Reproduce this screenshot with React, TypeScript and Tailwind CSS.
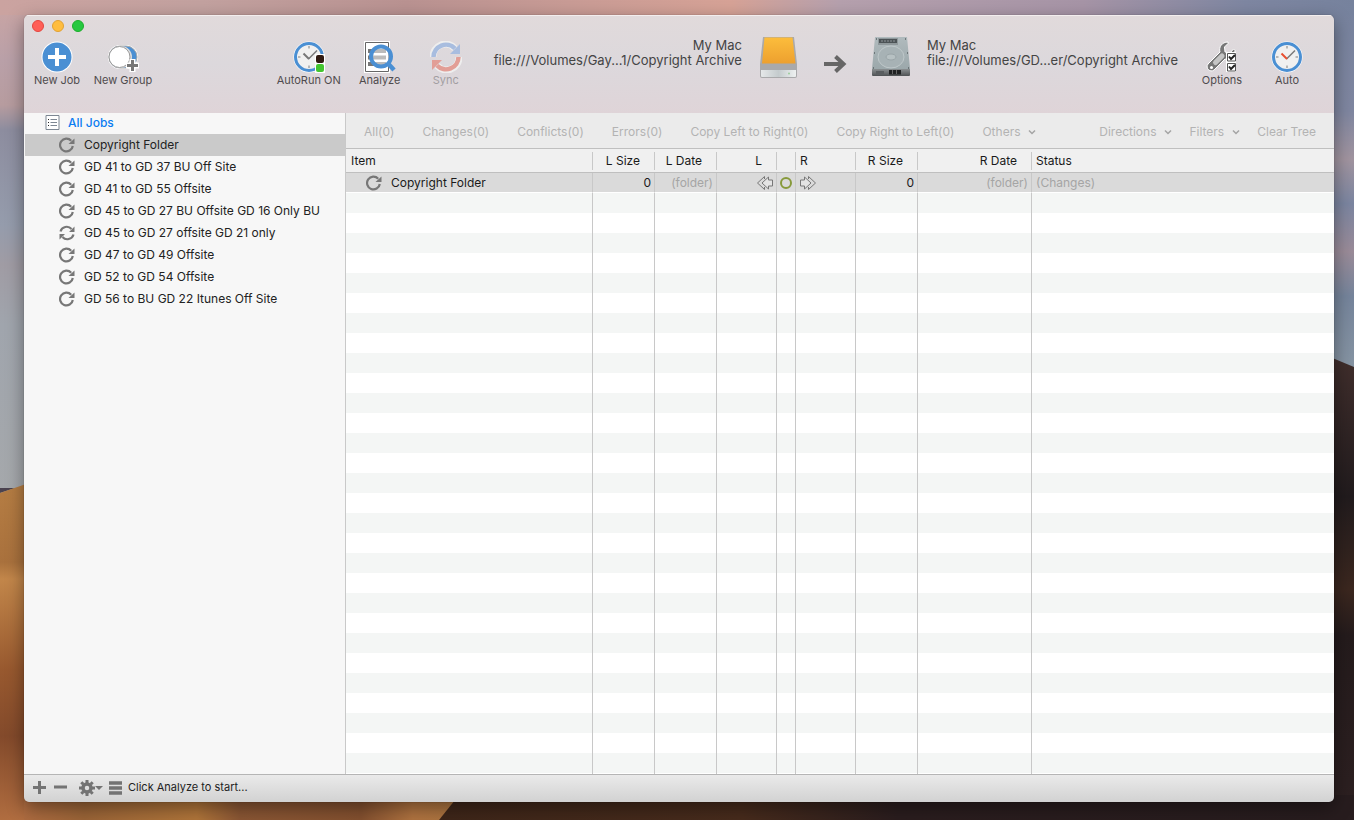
import { useState } from 'react';
import type { ReactNode } from 'react';

const jobs = [
    { name: "Copyright Folder", twoWay: false },
    { name: "GD 41 to GD 37 BU Off Site", twoWay: false },
    { name: "GD 41 to GD 55 Offsite", twoWay: false },
    { name: "GD 45 to GD 27 BU Offsite GD 16 Only BU", twoWay: false },
    { name: "GD 45 to GD 27 offsite GD 21 only", twoWay: true },
    { name: "GD 47 to GD 49 Offsite", twoWay: false },
    { name: "GD 52 to GD 54 Offsite", twoWay: false },
    { name: "GD 56 to BU GD 22 Itunes Off Site", twoWay: false }
];

const filters = ["All(0)", "Changes(0)", "Conflicts(0)", "Errors(0)", "Copy Left to Right(0)", "Copy Right to Left(0)"];

const columns = [
    { title: "Item", width: "w-[247px]", align: "text-left pl-[5px]" },
    { title: "L Size", width: "w-[62px]", align: "text-right pr-[14px]" },
    { title: "L Date", width: "w-[62px]", align: "text-right pr-[14px]" },
    { title: "L", width: "w-[60px]", align: "text-right pr-[14px]" },
    { title: "", width: "w-[19px]", align: "" },
    { title: "R", width: "w-[60px]", align: "text-left pl-1" },
    { title: "R Size", width: "w-[62px]", align: "text-right pr-[14px]" },
    { title: "R Date", width: "w-[114px]", align: "text-right pr-[14px]" },
    { title: "Status", width: "", align: "text-left pl-1" }
];

const emptyRows = Array.from({ length: 60 }, (_, i) => i);

function Wallpaper() {
    return (
        <svg className="absolute inset-0 -z-10 h-full w-full" viewBox="0 0 1354 820" preserveAspectRatio="none" aria-hidden="true">
            <defs>
                <linearGradient id="skyLeft" x1="0" y1="0" x2="0" y2="500" gradientUnits="userSpaceOnUse">
                    <stop offset="0" stopColor="#cba5a3" />
                    <stop offset="0.12" stopColor="#b9a0a8" />
                    <stop offset="0.21" stopColor="#b79c9f" />
                    <stop offset="0.26" stopColor="#8d8d9f" />
                    <stop offset="0.45" stopColor="#959cac" />
                    <stop offset="0.53" stopColor="#a09ca4" />
                    <stop offset="0.65" stopColor="#a0a5ad" />
                    <stop offset="1" stopColor="#a5a8ab" />
                </linearGradient>
                <linearGradient id="skyRight" x1="0" y1="0" x2="0" y2="370" gradientUnits="userSpaceOnUse">
                    <stop offset="0" stopColor="#76829d" />
                    <stop offset="0.3" stopColor="#7f86a0" />
                    <stop offset="0.43" stopColor="#a1949f" />
                    <stop offset="0.55" stopColor="#7b85a0" />
                    <stop offset="0.68" stopColor="#9a8b98" />
                    <stop offset="0.8" stopColor="#75849b" />
                    <stop offset="1" stopColor="#8795a3" />
                </linearGradient>
                <linearGradient id="skyTop">
                    <stop offset="0" stopColor="#cba3a0" />
                    <stop offset="0.15" stopColor="#c2a19f" />
                    <stop offset="0.3" stopColor="#b99291" />
                    <stop offset="0.42" stopColor="#c89b95" />
                    <stop offset="0.54" stopColor="#d6a296" />
                    <stop offset="0.62" stopColor="#b5a0ad" />
                    <stop offset="0.8" stopColor="#a694a6" />
                    <stop offset="0.92" stopColor="#7e86a1" />
                    <stop offset="1" stopColor="#76829d" />
                </linearGradient>
                <linearGradient id="dune" x1="0" y1="485" x2="0" y2="820" gradientUnits="userSpaceOnUse">
                    <stop offset="0" stopColor="#b57d43" />
                    <stop offset="0.23" stopColor="#a9713d" />
                    <stop offset="0.28" stopColor="#c2864a" />
                    <stop offset="0.55" stopColor="#98592f" />
                    <stop offset="0.75" stopColor="#834a2b" />
                    <stop offset="1" stopColor="#b06d40" />
                </linearGradient>
                <linearGradient id="duneCrest" x1="24" y1="0" x2="456" y2="0" gradientUnits="userSpaceOnUse">
                    <stop offset="0" stopColor="#ad6b40" />
                    <stop offset="0.14" stopColor="#9a6437" />
                    <stop offset="0.4" stopColor="#b0753a" />
                    <stop offset="0.5" stopColor="#8a5634" />
                    <stop offset="0.78" stopColor="#83502f" />
                    <stop offset="0.9" stopColor="#b07340" />
                    <stop offset="1" stopColor="#ab743f" />
                </linearGradient>
                <linearGradient id="duneShadow" x1="440" y1="0" x2="1354" y2="0" gradientUnits="userSpaceOnUse">
                    <stop offset="0" stopColor="#3e2619" />
                    <stop offset="0.33" stopColor="#472b1c" />
                    <stop offset="0.5" stopColor="#2a1d1e" />
                    <stop offset="1" stopColor="#271c1e" />
                </linearGradient>
                <linearGradient id="shade" x1="0" y1="358" x2="0" y2="820" gradientUnits="userSpaceOnUse">
                    <stop offset="0" stopColor="#402e2c" />
                    <stop offset="0.3" stopColor="#211b1d" />
                    <stop offset="0.5" stopColor="#3b271f" />
                    <stop offset="0.6" stopColor="#241b1c" />
                    <stop offset="1" stopColor="#2d2021" />
                </linearGradient>
            </defs>
            <rect width="677" height="820" fill="url(#skyLeft)" />
            <rect x="677" width="677" height="820" fill="url(#skyRight)" />
            <rect width="1354" height="15" fill="url(#skyTop)" />
            <path d="M0 488h15l-15 5z" fill="#4b4350" />
            <path d="M0 493l26-9V820H0z" fill="url(#dune)" />
            <path d="M1330 357l24 10V820h-24z" fill="url(#shade)" />
            <rect x="400" y="795" width="954" height="25" fill="url(#duneShadow)" />
            <path d="M24 795h435l-20 25H24z" fill="url(#duneCrest)" />
        </svg>
    );
}

function ClockFace({ hand }: { hand: string }) {
    return (
        <g>
            <circle cx="16" cy="16" r="15.5" fill="#fff" />
            <circle cx="16" cy="16" r="13.5" fill="#f0f0f0" stroke="#4a8fd3" strokeWidth="3" />
            <path d="M16 5v2.5M16 24.5V27M5 16h2.5M24.5 16H27" stroke="#a5a5a5" strokeWidth="1.5" />
            <path d="M15.5 18L24 9.5" stroke="#777" strokeWidth="1.5" />
            <path d="M16 18l-5.5-5.5" stroke={hand} strokeWidth="2" />
        </g>
    );
}

function NewJobIcon() {
    return (
        <svg className="size-8" viewBox="0 0 32 32">
            <circle cx="16" cy="16" r="15.5" fill="#fff" />
            <circle cx="16" cy="16" r="14.5" fill="#4a8fd3" />
            <path d="M16 7v18M7 16h18" stroke="#fff" strokeWidth="4" />
        </svg>
    );
}

function NewGroupIcon() {
    return (
        <svg className="size-8" viewBox="0 0 32 32">
            <rect x="1" y="4" width="30" height="24" rx="12" fill="#fff" />
            <rect x="2" y="5" width="28" height="22" rx="11" fill="#4a8fd3" stroke="#aaa" />
            <circle cx="14" cy="16" r="11" fill="#ddd" />
            <circle cx="12.5" cy="16" r="10.5" fill="#fff" stroke="#999" />
            <path d="M25.5 18v13M19 24.5h13" stroke="#fff" strokeWidth="6" />
            <path d="M25.5 19v11M20 24.5h11" stroke="#777" strokeWidth="3" />
        </svg>
    );
}

function AutoRunIcon() {
    return (
        <svg className="size-8" viewBox="0 0 32 32">
            <ClockFace hand="#777" />
            <path d="M22 13h10v19H22z" fill="#fff" />
            <rect x="23" y="14" width="8" height="8" rx="2" fill="#301a12" />
            <rect x="23" y="23" width="8" height="8" rx="2" fill="#43c52f" />
        </svg>
    );
}

function AnalyzeIcon() {
    return (
        <svg className="size-8" viewBox="0 0 32 32">
            <path d="M0 0h26v32H0z" fill="#fff" />
            <path d="M1.5 1.5h23v29h-23z" fill="#fff" stroke="#666" />
            <path d="M4 10h18M4 16.5h18M4 23h18" stroke="#777" strokeWidth="4" />
            <circle cx="17" cy="15.5" r="10" fill="#fff" fillOpacity="0.5" stroke="#4a8fd3" strokeWidth="4" />
            <path d="M24 22.5l6 6.5" stroke="#4a8fd3" strokeWidth="4.5" />
        </svg>
    );
}

function SyncIcon() {
    return (
        <svg className="size-8" viewBox="0 0 32 32" fill="none">
            <path d="M3 16A12.5 12.5 0 0 1 25 7.5" stroke="#eee" strokeWidth="7" />
            <path d="M29 16A12.5 12.5 0 0 1 7 24.5" stroke="#eee" strokeWidth="7" />
            <path d="M3.5 16A12.5 12.5 0 0 1 25 7.5" stroke="#a8bddf" strokeWidth="4.5" />
            <path d="M30 3v10H20z" fill="#a8bddf" />
            <path d="M28.5 16A12.5 12.5 0 0 1 7 24.5" stroke="#e29e96" strokeWidth="4.5" />
            <path d="M2 29V19h10z" fill="#e29e96" />
        </svg>
    );
}

function OptionsIcon() {
    return (
        <svg className="size-8" viewBox="0 0 32 32">
            <path
                d="M22 1C16 1 12.5 6 14 11L2 23c-3 4 2 9 6 6l11-11c5 1.5 10-3 10-8.5L27.5 8 24 12l-5-1-.5-5L22 2.5z"
                fill="#777"
                stroke="#fff"
            />
            <path d="M9.5 21.5l6.5-6.5" stroke="#c5c5c5" strokeWidth="5" strokeLinecap="round" />
            <circle cx="5.5" cy="26.5" r="1.5" fill="#fff" />
            <path d="M20 11h10v20H20z" fill="#fff" />
            <path d="M21.5 12.5h8V20h-8zM21.5 22.5h8V30h-8z" fill="#fff" stroke="#555" />
            <path d="M23 15.500l2 2.500 4-4M23 25.500l2 2.500 4-4" fill="none" stroke="#222" strokeWidth="2" />
        </svg>
    );
}

function AutoIcon() {
    return (
        <svg className="size-8" viewBox="0 0 32 32">
            <ClockFace hand="#e84e30" />
        </svg>
    );
}

function ExternalDriveIcon() {
    return (
        <svg className="h-[42px] w-10" viewBox="0 0 40 42" role="img" aria-label="External drive">
            <defs>
                <linearGradient id="driveTop" x1="0" y1="0" x2="0" y2="1">
                    <stop offset="0" stopColor="#fcbd3c" />
                    <stop offset="1" stopColor="#eda02f" />
                </linearGradient>
                <linearGradient id="driveFront">
                    <stop offset="0" stopColor="#e5e8e9" />
                    <stop offset="0.5" stopColor="#c4cbcd" />
                    <stop offset="1" stopColor="#eef1f1" />
                </linearGradient>
            </defs>
            <path d="M5 0h31l3 27v12q0 2-2 2H4q-2 0-2-2V27z" fill="#a9a9ab" />
            <path d="M6.500 0.500h28L37.500 26.500H4z" fill="url(#driveTop)" />
            <path d="M3 33h35v6q0 1-1 1H4q-1 0-1-1z" fill="url(#driveFront)" />
            <circle cx="31" cy="36.5" r="1" fill="#9ccc9c" />
        </svg>
    );
}

function HardDiskIcon() {
    return (
        <svg className="h-[42px] w-10" viewBox="0 0 40 42" role="img" aria-label="Internal drive">
            <defs>
                <linearGradient id="diskTop" x1="0" y1="0" x2="0" y2="1">
                    <stop offset="0" stopColor="#b0babd" />
                    <stop offset="1" stopColor="#98a5a8" />
                </linearGradient>
                <linearGradient id="diskFront" x1="0" y1="0" x2="0" y2="1">
                    <stop offset="0" stopColor="#8a8f91" />
                    <stop offset="1" stopColor="#4e5153" />
                </linearGradient>
            </defs>
            <path d="M4 0h32l3 32v6H1v-6z" fill="url(#diskTop)" />
            <path d="M1 32h38v6q0 1-1 1H2q-1 0-1-1z" fill="url(#diskFront)" />
            <path d="M7 1h20v7H7z" fill="#8f989b" />
            <path d="M8 2h18v4H8z" fill="#4c5356" />
            <path d="M10 4h14" stroke="#8c9497" strokeDasharray="2 1" />
            <ellipse cx="20" cy="20" rx="13" ry="11" fill="#a7b2b5" stroke="#bfc8ca" />
            <ellipse cx="20" cy="20" rx="5" ry="3" fill="#b7c1c3" stroke="#9aa5a8" />
            <path d="M18 33h12v4.500H18z" fill="#202223" />
            <path d="M21.500 33v4M25.500 33v4" stroke="#666" />
            <path d="M5 34h8v3H5z" fill="#595d5f" />
            <path d="M5 2h1M34 2h1M3 16h1M36 16h1M2 31h1M37 31h1" stroke="#5c6366" strokeWidth="1.5" />
        </svg>
    );
}

function JobIcon({ twoWay = false }: { twoWay?: boolean }) {
    return (
        <svg className="size-4 shrink-0" viewBox="0 0 16 16" fill="none" aria-hidden="true">
            {twoWay ? (
                <>
                    <path d="M1.5 6.500A6.400 6.400 0 0 1 12.500 4M14.500 9.500A6.400 6.400 0 0 1 3.500 12" stroke="#777" strokeWidth="2.2" />
                    <path d="M15.500 1.500V7H10zM0.500 14.500V9H6z" fill="#777" />
                </>
            ) : (
                <>
                    <path d="M12.200 3.700A6.400 6.400 0 1 0 13.800 9" stroke="#777" strokeWidth="2.2" />
                    <path d="M15.500 1.500V7H9.500z" fill="#777" />
                </>
            )}
        </svg>
    );
}

function ToolButton({ label, className, disabled, children }: { label: string; className: string; disabled?: boolean; children: ReactNode }) {
    return (
        <button
            type="button"
            disabled={disabled}
            className={`flex shrink-0 flex-col items-center whitespace-nowrap text-[11px] leading-[14px] text-[#4f4b4d] disabled:text-[#a29ea2] ${className}`}
        >
            {children}
            {label}
        </button>
    );
}

function Chevron() {
    return (
        <svg className="h-2 w-2" viewBox="0 0 8 8" fill="none" aria-hidden="true">
            <path d="M1 2.500l3 3 3-3" stroke="#a5a5a5" strokeWidth="1.5" />
        </svg>
    );
}

function Toolbar() {
    return (
        <header className="h-[98px] shrink-0 bg-linear-to-b from-[#e1dadb] via-[#dcd8dc] to-[#dfd4d8] shadow-[inset_0_1px_0_#f3eeee]">
            <div className="flex h-[22px] items-center gap-2 pl-2">
                <button type="button" aria-label="Close" className="size-3 rounded-full border border-[#e2463f] bg-[#ff5f57]" />
                <button type="button" aria-label="Minimize" className="size-3 rounded-full border border-[#e0a033] bg-[#ffbd3f]" />
                <button type="button" aria-label="Zoom" className="size-3 rounded-full border border-[#1dad2b] bg-[#27c840]" />
            </div>
            <div className="flex items-start">
                <div className="flex pt-1">
                    <ToolButton label="New Job" className="w-[66px]"><NewJobIcon /></ToolButton>
                    <ToolButton label="New Group" className="w-[66px]"><NewGroupIcon /></ToolButton>
                </div>
                <div className="flex flex-1 items-start justify-end pr-3">
                    <div className="flex gap-[2px] pt-1">
                        <ToolButton label="AutoRun ON" className="w-[74px]"><AutoRunIcon /></ToolButton>
                        <ToolButton label="Analyze" className="w-16"><AnalyzeIcon /></ToolButton>
                        <ToolButton label="Sync" className="w-16" disabled><SyncIcon /></ToolButton>
                    </div>
                    <div className="ml-4 pt-px text-right text-[13px] leading-[15px] whitespace-nowrap text-[#444]">
                        <p>My Mac</p>
                        <p>file:///Volumes/Gay...1/Copyright Archive</p>
                    </div>
                    <div className="flex items-start pl-4">
                        <ExternalDriveIcon />
                        <svg className="mt-[17px] ml-[25px] h-5 w-6" viewBox="0 0 24 20" fill="none" role="img" aria-label="Copies to">
                            <path d="M1 10h20M12.5 2.500l8 7.500-8 7.500" stroke="#666" strokeWidth="4" />
                        </svg>
                        <div className="ml-6"><HardDiskIcon /></div>
                    </div>
                    <div className="ml-4 pt-px text-left text-[13px] leading-[15px] whitespace-nowrap text-[#444]">
                        <p>My Mac</p>
                        <p>file:///Volumes/GD...er/Copyright Archive</p>
                    </div>
                </div>
                <div className="flex gap-[2px] pt-1 pr-4">
                    <ToolButton label="Options" className="w-16"><OptionsIcon /></ToolButton>
                    <ToolButton label="Auto" className="w-[62px]"><AutoIcon /></ToolButton>
                </div>
            </div>
        </header>
    );
}

function Sidebar({ selected, onSelect }: { selected: number; onSelect: (index: number) => void }) {
    return (
        <nav className="w-[322px] shrink-0 border-r border-[#c9c9c9] bg-[#f7f7f7] pl-px">
            <h2 className="flex h-[21px] items-center gap-2 pb-[2px] pl-5 text-xs font-medium text-[#0a7cf2]">
                <svg className="h-[15px] w-[15px]" viewBox="0 0 15 15" aria-hidden="true">
                    <path d="M1 0.500h13v14H1z" fill="#fff" stroke="#7d8793" />
                    <path d="M3 4.500h1M3 7.500h1M3 10.500h1" stroke="#222" />
                    <path d="M5.500 4.500H12M5.500 7.500H12M5.500 10.500H12" stroke="#7d8793" />
                </svg>
                All Jobs
            </h2>
            <ul>
                {jobs.map((job, index) => (
                    <li key={job.name}>
                        <button
                            type="button"
                            onClick={() => onSelect(index)}
                            className={`flex h-[22px] w-full items-center gap-[9px] pl-[34px] text-xs text-[#222] ${index === selected ? 'bg-[#cacaca]' : ''}`}
                        >
                            <JobIcon twoWay={job.twoWay} />
                            {job.name}
                        </button>
                    </li>
                ))}
            </ul>
        </nav>
    );
}

function FilterBar() {
    return (
        <div className="flex h-9 shrink-0 items-center justify-between border-b border-[#bfbfbf] bg-[#ebebeb] px-[18px] pt-[3px] text-xs whitespace-nowrap text-[#b3b3b3]">
            <div className="flex items-center gap-7">
                {filters.map((filter) => (
                    <button key={filter} type="button" disabled>{filter}</button>
                ))}
                <button type="button" disabled className="flex items-center gap-2">Others <Chevron /></button>
            </div>
            <div className="flex items-center gap-[17px]">
                <button type="button" disabled className="flex items-center gap-2">Directions <Chevron /></button>
                <button type="button" disabled className="flex items-center gap-2">Filters <Chevron /></button>
                <button type="button" disabled>Clear Tree</button>
            </div>
        </div>
    );
}

function SyncTable() {
    const cell = "border-r border-[#c8c8c8] last:border-r-0";

    return (
        <div className="min-h-0 flex-1 overflow-hidden bg-white">
            <table className="w-full table-fixed border-separate border-spacing-0 text-xs">
                <thead>
                    <tr className="h-6 bg-[#f0f0f0] text-[#1a1a1a]">
                        {columns.map((column, index) => (
                            <th key={index} scope="col" className={`border-b border-[#bfbfbf] p-0 font-normal ${column.width}`}>
                                <div className={`h-[18px] leading-[18px] ${index < columns.length - 1 ? 'border-r border-[#c8c8c8]' : ''} ${column.align}`}>
                                    {column.title}
                                </div>
                            </th>
                        ))}
                    </tr>
                </thead>
                <tbody>
                    <tr className="h-5 bg-[#dadada] text-[#1a1a1a] [&>td]:border-b [&>td]:border-b-white [&>td]:py-0">
                        <td className={`${cell} pl-5`}>
                            <div className="flex items-center gap-[9px]"><JobIcon />Copyright Folder</div>
                        </td>
                        <td className={`${cell} pr-[3px] text-right`}>0</td>
                        <td className={`${cell} pr-[3px] text-right text-[#a5a5a5]`}>(folder)</td>
                        <td className={`${cell} pr-[3px]`}>
                            <svg className="ml-auto h-4 w-4" viewBox="0 0 16 16" fill="none" stroke="#777" role="img" aria-label="Copy left">
                                <path d="M7.500 1.500L0.500 8l7 6.500V12" />
                                <path d="M7.500 1.500V4" />
                                <path d="M11.500 2L5 8l6.500 6v-3h4V5h-4z" fill="#e4e4e4" />
                            </svg>
                        </td>
                        <td className={cell}>
                            <svg className="mx-auto h-3 w-3" viewBox="0 0 12 12" fill="none" role="img" aria-label="In sync">
                                <circle cx="6" cy="6" r="5" stroke="#879a3b" strokeWidth="2" />
                            </svg>
                        </td>
                        <td className={`${cell} pl-1`}>
                            <svg className="h-4 w-4" viewBox="0 0 16 16" fill="none" stroke="#777" role="img" aria-label="Copy right">
                                <path d="M8.500 1.500l7 6.500-7 6.500V12" />
                                <path d="M8.500 1.500V4" />
                                <path d="M4.500 2L11 8l-6.500 6v-3h-4V5h4z" fill="#e4e4e4" />
                            </svg>
                        </td>
                        <td className={`${cell} pr-[3px] text-right`}>0</td>
                        <td className={`${cell} pr-[3px] text-right text-[#a5a5a5]`}>(folder)</td>
                        <td className={`${cell} pl-1 text-[#a5a5a5]`}>(Changes)</td>
                    </tr>
                    {emptyRows.map((row) => (
                        <tr key={row} className="h-5 odd:bg-white even:bg-[#f4f6f5]" aria-hidden="true">
                            {columns.map((_, index) => (
                                <td key={index} className={`${cell} p-0`} />
                            ))}
                        </tr>
                    ))}
                </tbody>
            </table>
        </div>
    );
}

function StatusBar() {
    return (
        <footer className="flex h-7 shrink-0 items-center border-t border-[#b5b5b5] bg-linear-to-b from-[#eaeaea] to-[#d2d2d2] pb-[2px] pl-[9px] text-[11px] text-[#222]">
            <button type="button" aria-label="Add job">
                <svg className="size-[13px]" viewBox="0 0 13 13"><path d="M6.500 0v13M0 6.500h13" stroke="#737373" strokeWidth="3" /></svg>
            </button>
            <button type="button" aria-label="Remove job" className="ml-2">
                <svg className="size-[13px]" viewBox="0 0 13 13"><path d="M0 6h13" stroke="#737373" strokeWidth="3" /></svg>
            </button>
            <button type="button" aria-label="Job actions" className="ml-3 flex items-center">
                <svg className="size-4" viewBox="0 0 16 16" fill="none" stroke="#737373">
                    <circle cx="8" cy="8" r="4" strokeWidth="3.5" />
                    <path d="M8 0v3M8 13v3M0 8h3M13 8h3M2.300 2.300l2 2M11.700 11.700l2 2M2.300 13.700l2-2M11.700 4.300l2-2" strokeWidth="3" />
                </svg>
                <svg className="h-2 w-2" viewBox="0 0 8 8"><path d="M0 2h8L4 6z" fill="#737373" /></svg>
            </button>
            <button type="button" aria-label="Show log" className="ml-[6px]">
                <svg className="h-[14px] w-[13px]" viewBox="0 0 13 14"><path d="M0 2h13M0 7h13M0 12h13" stroke="#737373" strokeWidth="3.5" /></svg>
            </button>
            <p className="ml-[6px]">Click Analyze to start...</p>
        </footer>
    );
}

export default function App() {
    const [selected, setSelected] = useState(0);

    return (
        <div className="relative isolate flex h-screen overflow-hidden pt-[15px] pr-5 pb-[18px] pl-6 font-['Inter',sans-serif]">
            <Wallpaper />
            <div className="flex min-w-0 flex-1 flex-col overflow-hidden rounded-[5px] shadow-[0_0_1px_#0008,0_6px_18px_#0006]">
                <Toolbar />
                <div className="flex min-h-0 flex-1">
                    <Sidebar selected={selected} onSelect={setSelected} />
                    <main className="flex min-w-0 flex-1 flex-col">
                        <FilterBar />
                        <SyncTable />
                    </main>
                </div>
                <StatusBar />
            </div>
        </div>
    );
}
